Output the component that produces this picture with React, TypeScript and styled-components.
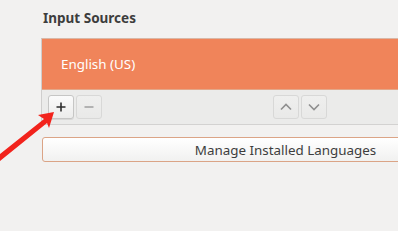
import React from "react";
import styled, { createGlobalStyle } from "styled-components";

const Global = createGlobalStyle`
  html, body { margin: 0; padding: 0; }
  body {
    background: #f2f1f0;
    overflow: hidden;
    font-family: "Noto Sans", "DejaVu Sans", sans-serif;
  }
`;

const Page = styled.div`
  position: relative;
  width: 398px;
  height: 231px;
  overflow: hidden;
  padding: 10px 0 0 41px;
  box-sizing: border-box;
`;

const Title = styled.div`
  font-size: 13.5px;
  font-weight: 700;
  line-height: 17px;
  color: #3d3d3d;
  margin-left: 2px;
  height: 17px;
`;

const Panel = styled.div`
  width: 520px;
  margin-top: 11px;
  border-left: 1px solid #cfcecd;
  border-top: 1px solid #d9b7a6;
`;

const Row = styled.div<{ $selected?: boolean }>`
  height: 50px;
  display: flex;
  align-items: center;
  padding-left: 19px;
  font-size: 13.4px;
  color: ${(p) => (p.$selected ? "#ffffff" : "#3d3d3d")};
  background: ${(p) => (p.$selected ? "#f0845a" : "#ffffff")};
  border-bottom: 1px solid #e3a789;
`;

const Toolbar = styled.div`
  height: 34px;
  display: flex;
  align-items: center;
  padding: 0 6px;
  background: #ebebea;
  border-bottom: 1px solid #d3d2d1;
`;

const Group = styled.div<{ $offset?: number }>`
  display: flex;
  gap: 2px;
  margin-left: ${(p) => p.$offset ?? 0}px;
`;

const ToolButton = styled.div<{ $disabled?: boolean }>`
  width: 26px;
  height: 24px;
  box-sizing: border-box;
  border: 1px solid ${(p) => (p.$disabled ? "#d8d8d7" : "#c6c6c5")};
  border-radius: 3px;
  background: ${(p) =>
    p.$disabled
      ? "linear-gradient(#efefee, #e9e9e8)"
      : "linear-gradient(#fbfbfb, #ececeb)"};
  display: flex;
  align-items: center;
  justify-content: center;
  box-shadow: ${(p) => (p.$disabled ? "none" : "0 1px 0 rgba(0,0,0,0.08)")};
`;

const Manage = styled.div`
  margin-top: 12px;
  margin-left: 1px;
  width: 487px;
  height: 25px;
  box-sizing: border-box;
  border: 1px solid #dba486;
  border-radius: 3px;
  background: linear-gradient(#ffffff, #f1f1f0);
  display: flex;
  align-items: center;
  justify-content: center;
  font-size: 13.4px;
  color: #3d3d3d;
`;

const Arrow = styled.svg`
  position: absolute;
  left: 0;
  top: 0;
  pointer-events: none;
`;

const Plus = () => (
  <svg width="12" height="12" viewBox="0 0 12 12">
    <path d="M6 1.5v9M1.5 6h9" stroke="#2e2e2e" strokeWidth="1.6" />
  </svg>
);

const Minus = () => (
  <svg width="12" height="12" viewBox="0 0 12 12">
    <path d="M1.5 6h9" stroke="#9a9a9a" strokeWidth="1.4" />
  </svg>
);

const Up = () => (
  <svg width="14" height="10" viewBox="0 0 14 10">
    <path d="M2 7.5L7 2.5l5 5" stroke="#8f8f8f" strokeWidth="1.6" fill="none" />
  </svg>
);

const Down = () => (
  <svg width="14" height="10" viewBox="0 0 14 10">
    <path d="M2 2.5l5 5 5-5" stroke="#8f8f8f" strokeWidth="1.6" fill="none" />
  </svg>
);

export default function App() {
  return (
    <>
      <Global />
      <Page>
        <Title>Input Sources</Title>
        <Panel>
          <Row $selected>English (US)</Row>
          <Toolbar>
            <Group>
              <ToolButton>
                <Plus />
              </ToolButton>
              <ToolButton $disabled>
                <Minus />
              </ToolButton>
            </Group>
            <Group $offset={171}>
              <ToolButton $disabled>
                <Up />
              </ToolButton>
              <ToolButton $disabled>
                <Down />
              </ToolButton>
            </Group>
          </Toolbar>
        </Panel>
        <Manage>Manage Installed Languages</Manage>
        <Arrow width="398" height="231" viewBox="0 0 398 231">
          <polygon
            points="54,112 38,115 44,119 0,154 0,161 47,123 49,128"
            fill="#f2231c"
          />
        </Arrow>
      </Page>
    </>
  );
}
